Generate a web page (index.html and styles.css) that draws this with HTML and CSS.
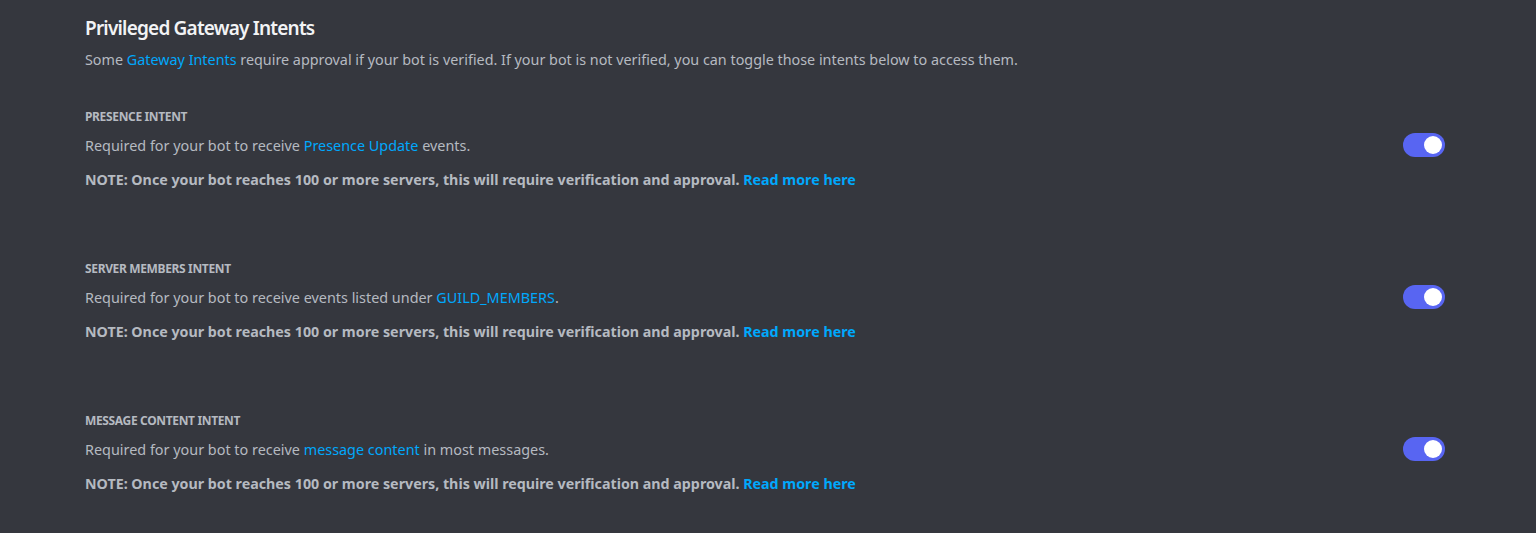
FILE: index.html
```html
<!DOCTYPE html>
<html>
<head>
<meta charset="utf-8">
<link rel="stylesheet" href="styles.css">
</head>
<body>
<main class="page">
  <h2 class="title">Privileged Gateway Intents</h2>
  <p class="intro">Some <a class="link">Gateway Intents</a> require approval if your bot is verified. If your bot is not verified, you can toggle those intents below to access them.</p>

  <section class="intent">
    <div class="label">PRESENCE INTENT</div>
    <div class="row">
      <p class="desc">Required for your bot to receive <a class="link">Presence Update</a> events.</p>
      <div class="switch"><span class="knob"></span></div>
    </div>
    <p class="note">NOTE: Once your bot reaches 100 or more servers, this will require verification and approval. <a class="link">Read more here</a></p>
  </section>

  <section class="intent">
    <div class="label">SERVER MEMBERS INTENT</div>
    <div class="row">
      <p class="desc">Required for your bot to receive events listed under <a class="link">GUILD_MEMBERS</a>.</p>
      <div class="switch"><span class="knob"></span></div>
    </div>
    <p class="note">NOTE: Once your bot reaches 100 or more servers, this will require verification and approval. <a class="link">Read more here</a></p>
  </section>

  <section class="intent">
    <div class="label">MESSAGE CONTENT INTENT</div>
    <div class="row">
      <p class="desc">Required for your bot to receive <a class="link">message content</a> in most messages.</p>
      <div class="switch"><span class="knob"></span></div>
    </div>
    <p class="note">NOTE: Once your bot reaches 100 or more servers, this will require verification and approval. <a class="link">Read more here</a></p>
  </section>
</main>
</body>
</html>
```

FILE: styles.css
```css
html, body {
  margin: 0;
  padding: 0;
  background: #35373e;
}
body {
  font-family: "Noto Sans", "Liberation Sans", sans-serif;
  color: #b5bac1;
  height: 533px;
  overflow: hidden;
}
.page {
  width: 1360px;
  padding: 16px 0 0 85px;
}
.title {
  margin: 0;
  font-size: 19px;
  line-height: 24px;
  font-weight: 600;
  letter-spacing: -0.8px;
  color: #f2f3f5;
}
.intro {
  margin: 10px 0 0;
  font-size: 14.35px;
  line-height: 20px;
}
.link {
  color: #00a8fc;
  cursor: pointer;
}
.intent {
  margin-top: 39px;
}
.intent + .intent {
  margin-top: 71px;
}
.label {
  font-size: 12px;
  line-height: 16px;
  font-weight: 700;
  letter-spacing: -0.35px;
  text-transform: uppercase;
}
.row {
  margin-top: 9px;
  display: flex;
  align-items: center;
  justify-content: space-between;
}
.desc {
  margin: 0;
  font-size: 14.4px;
  line-height: 20px;
}
.note {
  margin: 12px 0 0;
  font-size: 14.25px;
  line-height: 20px;
  font-weight: 700;
}
.switch {
  width: 42px;
  height: 24px;
  border-radius: 12px;
  background: #5865f2;
  display: flex;
  align-items: center;
  justify-content: flex-end;
  padding: 0 3px;
  box-sizing: border-box;
  transform: translateY(-1px);
}
.knob {
  width: 18px;
  height: 18px;
  border-radius: 50%;
  background: #ffffff;
}
```
